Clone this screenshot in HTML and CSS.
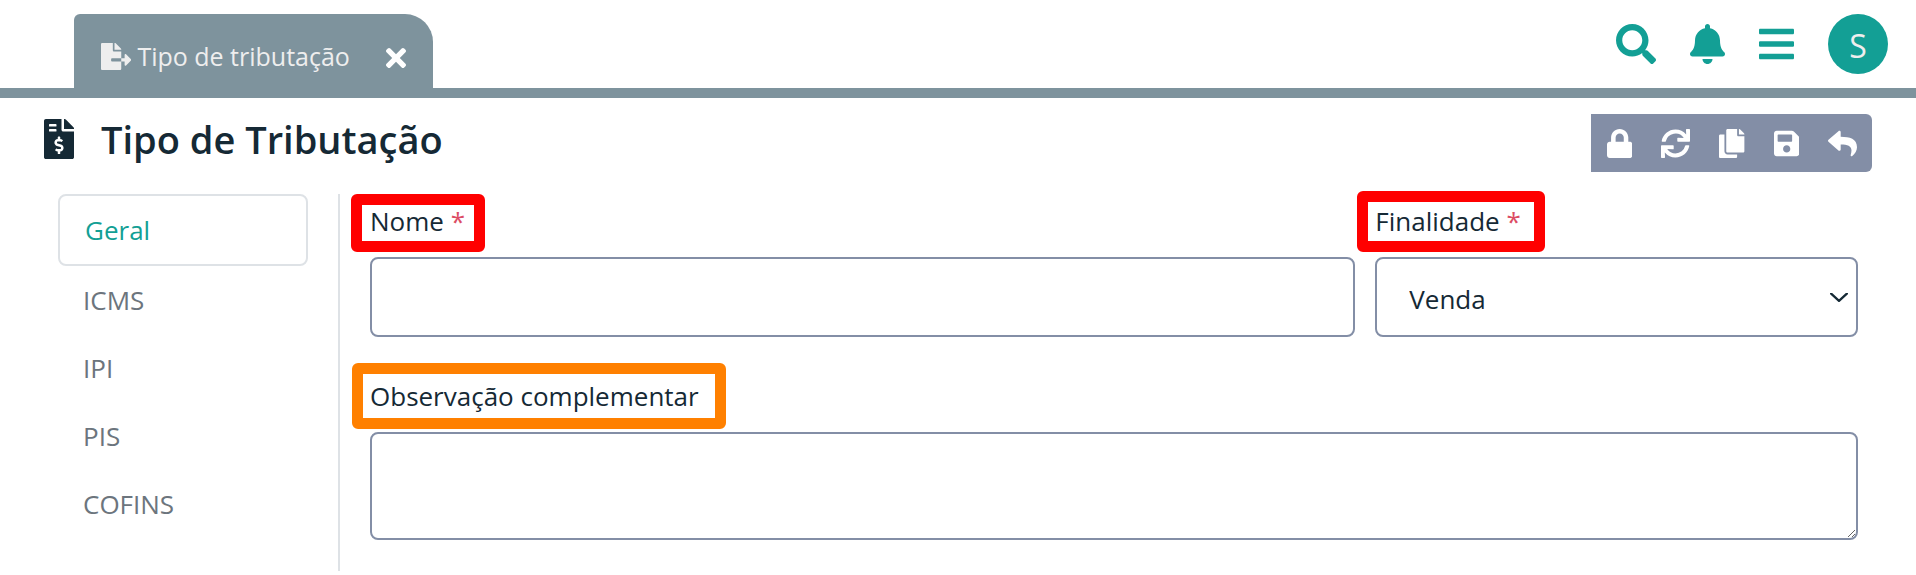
FILE: index.html
```html
<!DOCTYPE html>
<html lang="pt-BR">
<head>
<meta charset="utf-8">
<meta name="viewport" content="width=device-width, initial-scale=1">
<title>Tipo de Tributação</title>
<link rel="stylesheet" href="styles.css">
</head>
<body>
<header class="topbar">
  <div class="tab">
    <a class="tab-link" href="#">
      <svg class="tab-icon" viewBox="0 0 576 512" aria-hidden="true"><path d="M384 121.900c0-6.300-2.500-12.400-7-16.900L279.100 7c-4.500-4.500-10.600-7-17-7H256v128h128zM571 308l-95.700-96.400c-10.100-10.100-27.400-3-27.400 11.300V288h-64v64h64v65.200c0 14.300 17.300 21.400 27.400 11.300L571 332c6.600-6.600 6.600-17.400 0-24zm-379 28v-32c0-8.800 7.200-16 16-16h176V160H248c-13.200 0-24-10.800-24-24V0H24C10.700 0 0 10.700 0 24v464c0 13.300 10.700 24 24 24h336c13.300 0 24-10.700 24-24V352H208c-8.800 0-16-7.200-16-16z"/></svg>
      <span>Tipo de tributação</span>
    </a>
    <button class="tab-close" type="button" aria-label="Fechar">
      <svg viewBox="0 0 352 352" aria-hidden="true"><path d="M242.720 176l100.070-100.070c12.280-12.280 12.280-32.190 0-44.480l-22.240-22.240c-12.280-12.280-32.190-12.280-44.480 0L176 109.280 75.930 9.210c-12.280-12.280-32.190-12.280-44.480 0L9.210 31.450c-12.280 12.280-12.280 32.190 0 44.480L109.280 176 9.210 276.070c-12.280 12.280-12.280 32.190 0 44.480l22.240 22.240c12.280 12.280 32.200 12.280 44.480 0L176 242.720l100.070 100.070c12.280 12.280 32.200 12.280 44.480 0l22.240-22.240c12.280-12.280 12.280-32.190 0-44.480L242.720 176z"/></svg>
    </button>
  </div>
  <nav class="top-actions" aria-label="Atalhos">
    <button type="button" aria-label="Pesquisar"><svg viewBox="0 0 512 512" aria-hidden="true"><path d="M505 442.700L405.300 343c-4.500-4.500-10.600-7-17-7H372c27.600-35.300 44-79.700 44-128C416 93.100 322.900 0 208 0S0 93.100 0 208s93.100 208 208 208c48.300 0 92.700-16.400 128-44v16.300c0 6.400 2.500 12.500 7 17l99.700 99.700c9.400 9.400 24.600 9.400 33.900 0l28.300-28.300c9.400-9.400 9.400-24.600.1-34zM208 336c-70.700 0-128-57.200-128-128 0-70.700 57.200-128 128-128 70.700 0 128 57.200 128 128 0 70.700-57.200 128-128 128z"/></svg></button>
    <button type="button" aria-label="Notificações"><svg viewBox="0 0 448 512" aria-hidden="true"><path d="M224 512c35.320 0 63.970-28.650 63.970-64H160.030c0 35.350 28.650 64 63.970 64zm215.390-149.710c-19.320-20.760-55.470-51.990-55.470-154.290 0-77.700-54.480-139.900-127.940-155.160V32c0-17.670-14.320-32-31.980-32s-31.980 14.330-31.980 32v20.840C118.560 68.100 64.080 130.300 64.080 208c0 102.300-36.150 133.530-55.470 154.290-6 6.450-8.660 14.160-8.610 21.710.11 16.400 12.980 32 32.100 32h383.800c19.120 0 32-15.600 32.100-32 .05-7.550-2.610-15.270-8.610-21.710z"/></svg></button>
    <button type="button" aria-label="Menu"><svg viewBox="0 0 448 512" aria-hidden="true"><path d="M16 132h416c8.837 0 16-7.163 16-16V76c0-8.837-7.163-16-16-16H16C7.163 60 0 67.163 0 76v40c0 8.837 7.163 16 16 16zm0 160h416c8.837 0 16-7.163 16-16v-40c0-8.837-7.163-16-16-16H16c-8.837 0-16 7.163-16 16v40c0 8.837 7.163 16 16 16zm0 160h416c8.837 0 16-7.163 16-16v-40c0-8.837-7.163-16-16-16H16c-8.837 0-16 7.163-16 16v40c0 8.837 7.163 16 16 16z"/></svg></button>
    <button class="avatar" type="button">S</button>
  </nav>
</header>

<div class="page-head">
  <svg class="page-icon" viewBox="0 0 384 512" aria-hidden="true"><path d="M377 105L279.100 7c-4.500-4.500-10.600-7-17-7H256v128h128v-6.100c0-6.300-2.500-12.400-7-16.900zm-153 31V0H24C10.700 0 0 10.700 0 24v464c0 13.300 10.700 24 24 24h336c13.300 0 24-10.700 24-24V160H248c-13.200 0-24-10.800-24-24zM64 72c0-4.420 3.580-8 8-8h80c4.420 0 8 3.580 8 8v16c0 4.420-3.580 8-8 8H72c-4.420 0-8-3.580-8-8V72zm0 80v-16c0-4.420 3.580-8 8-8h80c4.420 0 8 3.580 8 8v16c0 4.420-3.580 8-8 8H72c-4.420 0-8-3.580-8-8zm144 263.880V440c0 4.420-3.580 8-8 8h-16c-4.420 0-8-3.580-8-8v-24.290c-11.290-.58-22.270-4.520-31.370-11.350-3.900-2.930-4.100-8.770-.57-12.140l11.750-11.210c2.770-2.640 6.890-2.760 10.130-.73 3.870 2.420 8.260 3.720 12.820 3.720h28.110c6.500 0 11.800-5.920 11.800-13.190 0-5.950-3.610-11.190-8.770-12.730l-45-13.500c-18.590-5.580-31.580-23.420-31.580-43.390 0-24.520 19.050-44.440 42.670-45.070V232c0-4.420 3.580-8 8-8h16c4.420 0 8 3.580 8 8v24.290c11.290.58 22.270 4.510 31.370 11.350 3.900 2.930 4.100 8.770.57 12.140l-11.750 11.210c-2.770 2.640-6.890 2.760-10.130.73-3.870-2.430-8.260-3.720-12.820-3.720h-28.110c-6.500 0-11.800 5.920-11.800 13.190 0 5.950 3.610 11.190 8.770 12.730l45 13.500c18.590 5.580 31.580 23.420 31.580 43.390 0 24.530-19.050 44.440-42.670 45.070z"/></svg>
  <h1 class="page-title">Tipo de Tributação</h1>
  <div class="toolbar">
    <button type="button" aria-label="Bloquear"><svg viewBox="0 0 448 512" aria-hidden="true"><path d="M400 224h-24v-72C376 68.200 307.800 0 224 0S72 68.200 72 152v72H48c-26.500 0-48 21.500-48 48v192c0 26.500 21.500 48 48 48h352c26.500 0 48-21.500 48-48V272c0-26.500-21.500-48-48-48zm-104 0H152v-72c0-39.700 32.300-72 72-72s72 32.300 72 72v72z"/></svg></button>
    <button type="button" aria-label="Atualizar"><svg viewBox="0 0 512 512" aria-hidden="true"><path d="M440.650 12.570l4 82.770A247.160 247.160 0 0 0 255.830 8C134.730 8 33.910 94.920 12.290 209.820A12 12 0 0 0 24.090 224h49.050a12 12 0 0 0 11.670-9.260 175.910 175.910 0 0 1 317-56.940l-101.460-4.860a12 12 0 0 0-12.570 12v47.410a12 12 0 0 0 12 12H500a12 12 0 0 0 12-12V12a12 12 0 0 0-12-12h-47.370a12 12 0 0 0-11.980 12.570zM255.830 432a175.610 175.610 0 0 1-146-77.800l101.800 4.870a12 12 0 0 0 12.570-12v-47.400a12 12 0 0 0-12-12H12a12 12 0 0 0-12 12V500a12 12 0 0 0 12 12h47.350a12 12 0 0 0 12-12.600l-4.150-82.570A247.170 247.170 0 0 0 255.830 504c121.110 0 221.930-86.920 243.550-201.820a12 12 0 0 0-11.800-14.180h-49.050a12 12 0 0 0-11.670 9.260A175.860 175.860 0 0 1 255.830 432z"/></svg></button>
    <button type="button" aria-label="Copiar"><svg viewBox="0 0 448 512" aria-hidden="true"><path d="M320 448v40c0 13.255-10.745 24-24 24H24c-13.255 0-24-10.745-24-24V120c0-13.255 10.745-24 24-24h72v296c0 30.879 25.121 56 56 56h168zm0-344V0H152c-13.255 0-24 10.745-24 24v368c0 13.255 10.745 24 24 24h272c13.255 0 24-10.745 24-24V128H344c-13.200 0-24-10.800-24-24zm120.971-31.029L375.029 7.029A24 24 0 0 0 358.059 0H352v96h96v-6.059a24 24 0 0 0-7.029-16.970z"/></svg></button>
    <button type="button" aria-label="Salvar"><svg viewBox="0 0 448 512" aria-hidden="true"><path d="M433.941 129.941l-83.882-83.882A48 48 0 0 0 316.118 32H48C21.490 32 0 53.490 0 80v352c0 26.510 21.490 48 48 48h352c26.510 0 48-21.490 48-48V163.882a48 48 0 0 0-14.059-33.941zM224 416c-35.346 0-64-28.654-64-64 0-35.346 28.654-64 64-64s64 28.654 64 64c0 35.346-28.654 64-64 64zm96-304.520V212c0 6.627-5.373 12-12 12H76c-6.627 0-12-5.373-12-12V108c0-6.627 5.373-12 12-12h228.520c3.183 0 6.235 1.264 8.485 3.515l3.480 3.480A11.996 11.996 0 0 1 320 111.480z"/></svg></button>
    <button type="button" aria-label="Voltar"><svg viewBox="0 0 512 512" aria-hidden="true"><path d="M8.309 189.836L184.313 37.851C199.719 24.546 224 35.347 224 56.015v80.053c160.629 1.839 288 34.032 288 186.258 0 61.441-39.581 122.309-83.333 154.132-13.653 9.931-33.111-2.533-28.077-18.631 45.344-145.012-21.507-183.510-176.590-185.742V360c0 20.700-24.300 31.453-39.687 18.164l-176.004-152c-11.071-9.562-11.086-26.753 0-36.328z"/></svg></button>
  </div>
</div>

<main class="content">
  <nav class="side" aria-label="Seções">
    <a class="side-item active" href="#" aria-current="page">Geral</a>
    <a class="side-item" href="#">ICMS</a>
    <a class="side-item" href="#">IPI</a>
    <a class="side-item" href="#">PIS</a>
    <a class="side-item" href="#">COFINS</a>
  </nav>
  <form class="form">
    <div class="field span-8">
      <label class="marked" for="nome">Nome <span class="star">*</span></label>
      <input class="control" id="nome" type="text" required>
    </div>
    <div class="field span-4">
      <label class="marked wide" for="finalidade">Finalidade <span class="star">*</span></label>
      <div class="select-wrap">
        <select class="control select" id="finalidade" required><option>Venda</option></select>
        <svg class="chevron" viewBox="0 0 16 8" aria-hidden="true"><path d="M1 0.500l7 6.500 7-6.500"/></svg>
      </div>
    </div>
    <div class="field span-12">
      <label class="marked optional" for="obs">Observação complementar</label>
      <textarea class="control area" id="obs"></textarea>
    </div>
  </form>
</main>
</body>
</html>
```

FILE: styles.css
```css
* { box-sizing: border-box; }

body {
  margin: 0;
  background: #fff;
  color: #152935;
  font-family: "Segoe UI", "Open Sans", "Noto Sans", sans-serif;
  font-size: 26px;
  line-height: 36px;
}

button {
  padding: 0;
  border: 0;
  background: none;
  color: inherit;
  font: inherit;
}

a { color: inherit; text-decoration: none; }

svg { display: block; fill: currentColor; }

.topbar {
  display: flex;
  justify-content: space-between;
  padding: 14px 28px 0 74px;
  border-bottom: 10px solid #7e939d;
}

.tab {
  display: flex;
  align-items: center;
  gap: 36px;
  height: 74px;
  padding: 10px 27px 0;
  border-radius: 6px 28px 0 0;
  background: #7e939d;
  color: #eee;
  font-size: 25px;
}

.tab-link { display: flex; align-items: center; gap: 6px; }
.tab-icon { height: 27px; }
.tab-close { padding-top: 4px; color: #fff; }
.tab-close svg { width: 20px; }

.top-actions {
  display: flex;
  align-items: center;
  gap: 34px;
  height: 60px;
  color: #139f95;
}

.top-actions svg { height: 40px; }

.avatar {
  width: 60px;
  height: 60px;
  padding-top: 3px;
  border-radius: 50%;
  background: #139f95;
  color: #eee;
  font-size: 32px;
}

.page-head {
  display: flex;
  align-items: flex-start;
  padding: 16px 44px 22px;
}

.page-icon { height: 40px; margin-top: 5px; }

.page-title {
  margin: 0 auto 0 27px;
  font-size: 38px;
  font-weight: 600;
  line-height: 50px;
}

.toolbar {
  display: flex;
  align-items: center;
  gap: 29px;
  height: 58px;
  padding: 0 15px 0 16px;
  border-radius: 0 6px 6px 0;
  background: #838ea6;
  color: #fff;
}

.toolbar svg { height: 29px; }

.content { display: flex; padding: 0 58px; }

.side {
  display: flex;
  flex-direction: column;
  width: 250px;
  margin-right: 30px;
  color: #6c757d;
}

.side-item { padding: 16px 25px; }

.side-item.active {
  border: 2px solid #dee2e6;
  border-radius: 8px;
  color: #139f95;
}

.form {
  display: grid;
  flex: 1;
  grid-template-columns: repeat(12, 1fr);
  align-content: start;
  gap: 41px 20px;
  padding: 9px 0 31px 30px;
  border-left: 2px solid #dee2e6;
}

.field { display: flex; flex-direction: column; align-items: flex-start; gap: 18px; }
.span-8 { grid-column: span 8; }
.span-4 { grid-column: span 4; }
.span-12 { grid-column: span 12; }

.marked { position: relative; }

.marked::after {
  content: "";
  position: absolute;
  inset: -9px -20px -13px -19px;
  border: 11px solid #f00;
  border-radius: 6px;
  pointer-events: none;
}

.marked.wide::after { inset: -12px -24px -13px -18px; }

.marked.optional::after {
  inset: -15px -27px -15px -18px;
  border-color: #ff8000;
}

.star { color: #dc4c64; }

.control {
  display: block;
  width: 100%;
  height: 80px;
  padding: 0 32px;
  border: 2px solid #838ea6;
  border-radius: 8px;
  background: #fff;
  color: inherit;
  font: inherit;
  appearance: none;
}

.select { padding-top: 3px; }

.area { height: 108px; padding: 20px 32px; resize: vertical; }

.select-wrap { position: relative; width: 100%; }

.chevron {
  position: absolute;
  top: 36px;
  right: 10px;
  width: 18px;
  fill: none;
  stroke: currentColor;
  stroke-width: 2;
  stroke-linecap: round;
  stroke-linejoin: round;
  pointer-events: none;
}
```
